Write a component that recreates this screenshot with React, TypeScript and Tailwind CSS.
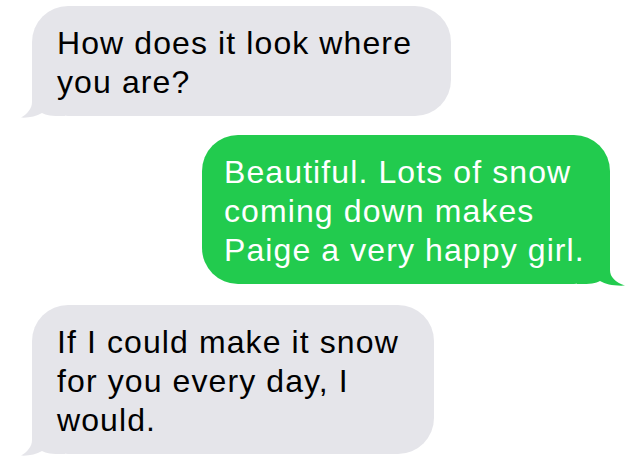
type Side = 'left' | 'right';

interface BubbleProps {
  side: Side;
  lines: string[];
  className: string;
}

// tail path: e = distance from tip to the bubble's edge
const tailPath = (e: number) =>
  `M${e} 4 L${e} 26 C${e} 33 ${e - 5} 38 0 41.6 C${e - 3} 42 ${e + 4} 40.5 ${e + 10} 37 C${e + 14} 39.5 ${e + 20} 40 ${e + 31} 40 L${e + 33} 40 L${e + 33} 4 Z`;

function Tail({ side, color }: { side: Side; color: string }) {
  if (side === 'left') {
    return (
      <svg viewBox="0 0 44 42" className="absolute -left-[11px] bottom-[-2px] h-[42px] w-[44px]" aria-hidden="true">
        <path d={tailPath(11)} fill={color} />
      </svg>
    );
  }
  return (
    <svg
      viewBox="0 0 48 42"
      className="absolute -right-[15px] bottom-[-2px] h-[42px] w-[48px] -scale-x-100"
      aria-hidden="true"
    >
      <path d={tailPath(15)} fill={color} />
    </svg>
  );
}

function Bubble({ side, lines, className }: BubbleProps) {
  const isLeft = side === 'left';
  const bg = isLeft ? '#e5e5ea' : '#22cb4e';
  return (
    <div
      className={`relative rounded-[36px] pt-[18px] pb-[14px] ${
        isLeft ? 'bg-[#e5e5ea] text-black pl-[25px]' : 'bg-[#22cb4e] text-white pl-[22px]'
      } ${className}`}
    >
      <Tail side={side} color={bg} />
      <div className="relative">
        {lines.map((line, i) => (
          <div key={i} className="whitespace-nowrap">
            {line}
          </div>
        ))}
      </div>
    </div>
  );
}

export default function App() {
  return (
    <div
      className="flex h-[461px] w-[634px] flex-col overflow-hidden bg-white pt-[6px] text-[32px] leading-[39px] tracking-[1.1px]"
      style={{ fontFamily: '"Liberation Sans", Arial, sans-serif' }}
    >
      <Bubble
        side="left"
        lines={['How does it look where', 'you are?']}
        className="ml-[32px] w-[419px]"
      />
      <Bubble
        side="right"
        lines={['Beautiful. Lots of snow', 'coming down makes', 'Paige a very happy girl.']}
        className="ml-[202px] mt-[19px] w-[408px]"
      />
      <Bubble
        side="left"
        lines={['If I could make it snow', 'for you every day, I', 'would.']}
        className="ml-[32px] mt-[21px] w-[402px]"
      />
    </div>
  );
}
